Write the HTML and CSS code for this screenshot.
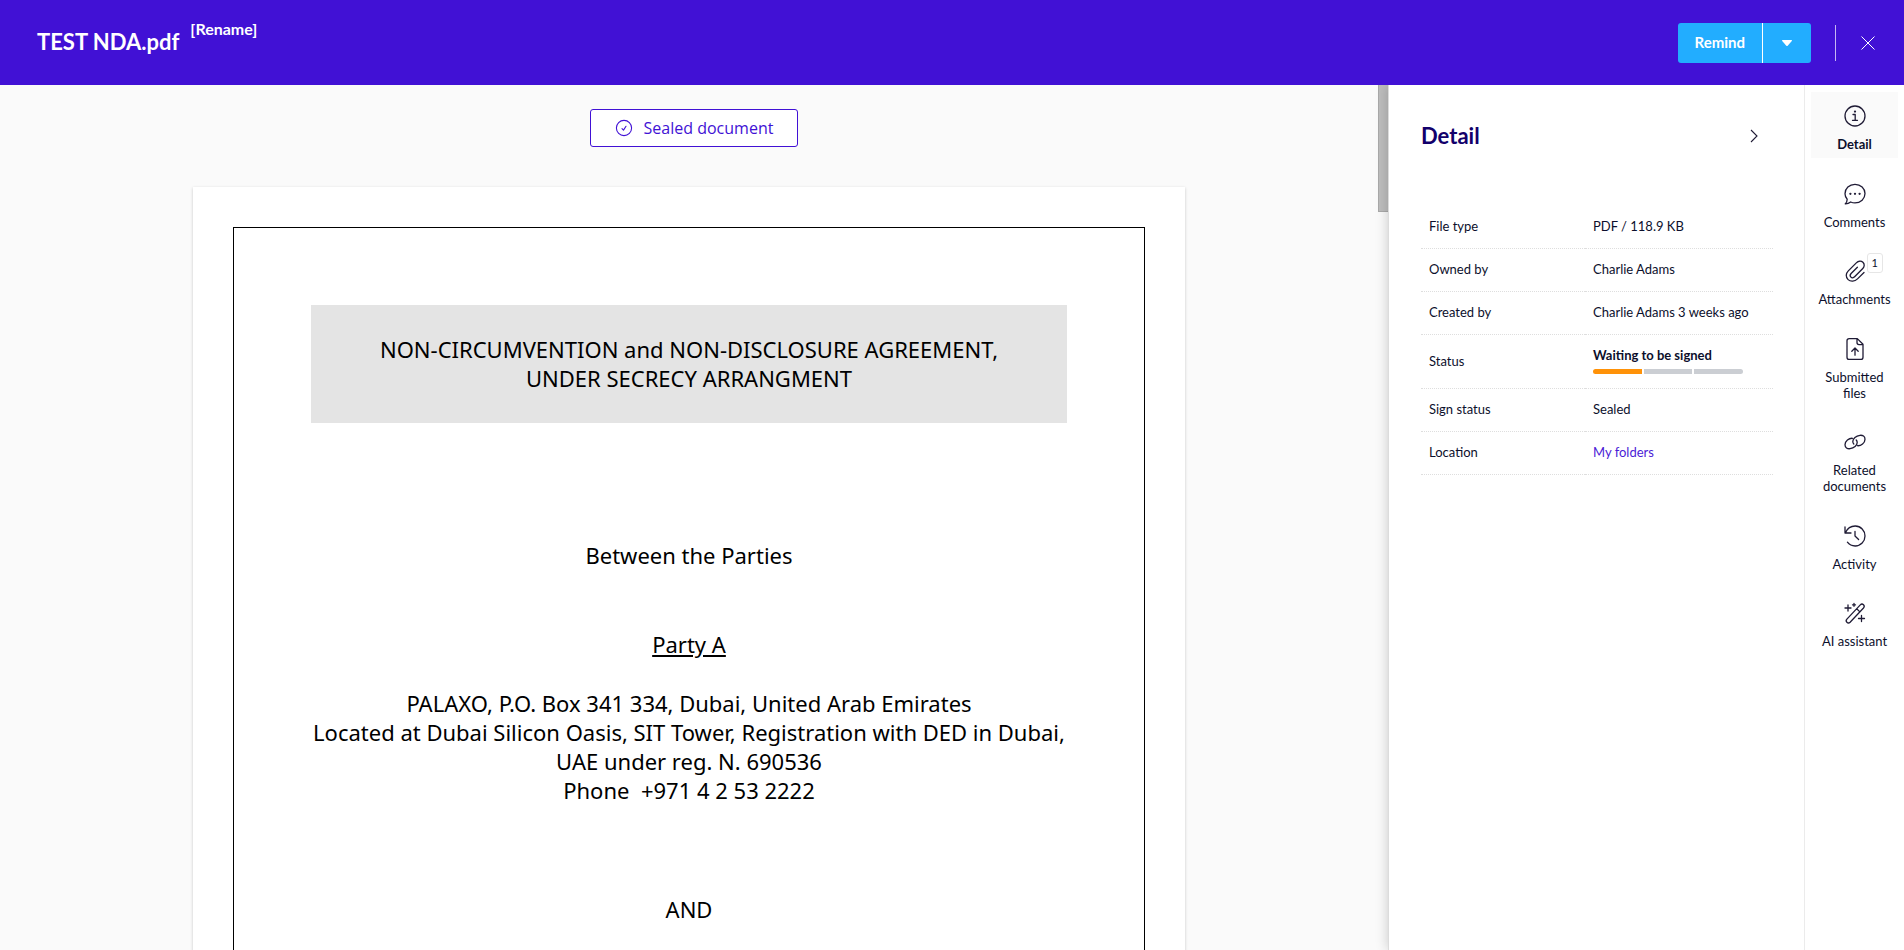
FILE: index.html
```html
<!DOCTYPE html>
<html lang="en">
<head>
<meta charset="utf-8">
<title>TEST NDA.pdf</title>
<link rel="stylesheet" href="styles.css">
</head>
<body class="app">
<header class="topbar">
  <div class="topbar-title">
    <h1 class="file-name">TEST NDA.pdf</h1>
    <button type="button" class="rename">[Rename]</button>
  </div>
  <div class="topbar-actions">
    <div class="split-button">
      <button type="button" class="split-main">Remind</button>
      <button type="button" class="split-toggle" aria-label="More actions">
        <svg width="12" height="8" viewBox="0 0 12 8"><path d="M1.6 1h8.800q1 .2.400 1L6.700 6.700q-.7.600-1.400 0L1.200 2q-.6-.8.400-1z" fill="#fff"/></svg>
      </button>
    </div>
    <span class="topbar-divider"></span>
    <button type="button" class="icon-button" aria-label="Close">
      <svg width="16" height="16" viewBox="0 0 16 16" fill="none" stroke="#fff" stroke-width="1"><path d="M1.500 1.500l13 13M14.500 1.500l-13 13"/></svg>
    </button>
  </div>
</header>
<div class="workspace">
  <main class="viewer">
    <div class="viewer-content">
      <button type="button" class="sealed">
        <svg width="18" height="18" viewBox="0 0 18 18" fill="none" stroke="currentColor" stroke-width="1.100" stroke-linecap="round" stroke-linejoin="round"><circle cx="9" cy="9" r="7.600"/><path d="M7 9.600l1.500 1.500 2.500-3.800"/></svg>
        Sealed document
      </button>
      <article class="sheet">
        <div class="sheet-frame">
          <h2 class="sheet-heading">NON-CIRCUMVENTION and NON-DISCLOSURE AGREEMENT,<br>UNDER SECRECY ARRANGMENT</h2>
          <p class="sheet-text sheet-intro">Between the Parties</p>
          <p class="sheet-text sheet-party"><u>Party A</u></p>
          <p class="sheet-text sheet-address">PALAXO, P.O. Box 341 334, Dubai, United Arab Emirates<br>Located at Dubai Silicon Oasis, SIT Tower, Registration with DED in Dubai,<br>UAE under reg. N. 690536<br>Phone&nbsp; +971 4 2 53 2222</p>
          <p class="sheet-text sheet-and">AND</p>
        </div>
      </article>
    </div>
    <div class="scrollbar"><div class="scrollbar-thumb"></div></div>
  </main>
  <aside class="detail">
    <div class="detail-head">
      <h2 class="detail-title">Detail</h2>
      <button type="button" class="icon-button" aria-label="Collapse">
        <svg width="16" height="16" viewBox="0 0 16 16" fill="none" stroke="#1f1b35" stroke-width="1.100"><path d="M5 2l6 6-6 6"/></svg>
      </button>
    </div>
    <table class="props">
      <tr><th scope="row">File type</th><td>PDF / 118.9 KB</td></tr>
      <tr><th scope="row">Owned by</th><td>Charlie Adams</td></tr>
      <tr><th scope="row">Created by</th><td>Charlie Adams 3 weeks ago</td></tr>
      <tr><th scope="row">Status</th><td><strong class="status">Waiting to be signed</strong><div class="steps"><span class="step step-done"></span><span class="step"></span><span class="step"></span></div></td></tr>
      <tr><th scope="row">Sign status</th><td>Sealed</td></tr>
      <tr><th scope="row">Location</th><td><a class="link" href="#">My folders</a></td></tr>
    </table>
  </aside>
  <nav class="rail">
    <button type="button" class="rail-item rail-active">
      <svg class="rail-icon" viewBox="0 0 24 24"><circle cx="12" cy="12" r="10"/><path d="M10 10.500h2.200v5.500M9.500 16.300h5"/><circle cx="12" cy="7.600" r=".5"/></svg>
      <span>Detail</span>
    </button>
    <button type="button" class="rail-item">
      <svg class="rail-icon" viewBox="0 0 24 24"><path d="M4.200 17.200C2.800 15.700 2 13.800 2 11.700 2 6.600 6.300 2.300 12 2.300s10 4.100 10 9.300-4.300 9.300-10 9.300c-1.600 0-3-.3-4.300-.9C6 21.300 4 22 2.200 21.900c1.300-1.300 2-3 2-4.700z"/><circle cx="7.400" cy="11.800" r=".5"/><circle cx="12" cy="11.800" r=".5"/><circle cx="16.600" cy="11.800" r=".5"/></svg>
      <span>Comments</span>
    </button>
    <button type="button" class="rail-item">
      <svg class="rail-icon" viewBox="0 0 24 24"><path d="M21 13.500l-6.500 6.400c-2.800 2.800-6.900 3.100-9.400.7s-2.500-6 .2-8.700l8-8c2-2 4.800-2.300 6.600-.6s1.700 4.300-.1 6.200l-8.200 8.300c-1.200 1.200-2.700 1.300-3.700.3s-.9-2.500.2-3.600l6.300-6.300"/></svg>
      <span>Attachments</span>
      <span class="badge">1</span>
    </button>
    <button type="button" class="rail-item">
      <svg class="rail-icon" viewBox="0 0 24 24"><path d="M14.300 1.600H6.200C5 1.600 4 2.600 4 3.800v16.400c0 1.200 1 2.200 2.200 2.200h11.600c1.200 0 2.200-1 2.200-2.200V7.300zM14 2v3.600c0 1.200.8 2 2 2h4M12 18.200v-7M8.800 14.200L12 11l3.200 3.200"/></svg>
      <span>Submitted<br>files</span>
    </button>
    <button type="button" class="rail-item">
      <svg class="rail-icon" viewBox="0 0 24 24"><path d="M9.500 8.300C6 8 2 11 2 14.800c0 2.800 2.300 4.200 5 3.900 4-.4 7.200-3.200 7.200-6.200 0-1-.4-1.900-1-2.500"/><path d="M14.500 15.700C18 16 22 13 22 9.200c0-2.800-2.300-4.200-5-3.900-4 .4-7.200 3.200-7.200 6.200 0 1 .4 1.900 1 2.500"/></svg>
      <span>Related<br>documents</span>
    </button>
    <button type="button" class="rail-item">
      <svg class="rail-icon" viewBox="0 0 24 24"><path d="M2 3v6h6M2.500 8.600C4.200 4.800 7.800 2 12.200 2 17.800 2 22 6.500 22 12s-4.300 10-9.800 10c-3.300 0-6-1.400-7.800-3.800M12 7.500V12l3.600 3.500"/></svg>
      <span>Activity</span>
    </button>
    <button type="button" class="rail-item">
      <svg class="rail-icon" viewBox="0 0 24 24"><path d="M3.900 18.100L17.300 3.900c1-1 2.300-1 3.200-.1s.9 2.200 0 3.200L7.100 21.200c-1 1-2.300 1-3.200.1s-.9-2.200 0-3.200zM13.700 7.700l3.200 3.200M5 4v6M2 7h6M18.500 14.500v6M15.500 17.500h6M11 2.300v3M9.500 3.800h3"/></svg>
      <span>AI assistant</span>
    </button>
  </nav>
</div>
</body>
</html>
```
FILE: styles.css
```css
* { box-sizing: border-box; }

.app {
  margin: 0;
  height: 100vh;
  display: flex;
  flex-direction: column;
  overflow: hidden;
  font-family: Lato, "Open Sans", sans-serif;
  font-size: 13px;
  line-height: 16px;
  color: #0c0f2c;
  background: #fff;
}

button { font: inherit; color: inherit; border: 0; background: none; padding: 0; cursor: pointer; }
svg { display: block; }

.topbar {
  flex: none;
  display: flex;
  align-items: center;
  justify-content: space-between;
  height: 85px;
  padding: 0 28px 0 37px;
  background: #4111d5;
  color: #fff;
}
.topbar-title { display: flex; align-items: flex-start; gap: 11px; padding-bottom: 8px; }
.file-name { margin: 9px 0 0; font-size: 22px; line-height: 24px; font-weight: 700; }
.rename { font-size: 16px; line-height: 16px; font-weight: 700; margin-bottom: 20px; }
.topbar-actions { display: flex; align-items: center; }
.split-button {
  display: flex;
  height: 40px;
  border-radius: 3px;
  background: #22adff;
  overflow: hidden;
}
.split-main { padding: 0 17px 2px; font-size: 15px; font-weight: 700; }
.split-toggle { display: grid; place-items: center; width: 49px; border-left: 1px solid #fff; }
.topbar-divider { width: 1px; height: 36px; margin: 0 24px; background: #c6b7f2; }
.icon-button { display: grid; place-items: center; }

.workspace { flex: 1; min-height: 0; display: flex; overflow: hidden; }

.viewer { flex: 1; min-width: 0; display: flex; background: #fafafa; overflow: hidden; }
.viewer-content {
  flex: 1;
  display: flex;
  flex-direction: column;
  align-items: center;
  gap: 40px;
  padding: 24px 32px 0;
}
.sealed {
  flex: none;
  display: flex;
  align-items: center;
  gap: 11px;
  height: 38px;
  margin-left: 10px;
  padding: 0 24px;
  border: 1px solid #4111d5;
  border-radius: 3px;
  background: #fff;
  color: #4111d5;
  font-family: "Open Sans", sans-serif;
  font-size: 16px;
}
.scrollbar { width: 10px; background: #fafafa; }
.scrollbar-thumb { height: 127px; background: #bdbdbd; border: 1px solid #a9a9a9; border-width: 0 0 1px 1px; }

.sheet {
  width: 100%;
  max-width: 992px;
  flex: none;
  padding: 40px;
  background: #fff;
  box-shadow: 0 1px 3px rgba(0, 0, 0, 0.2);
}
.sheet-frame {
  padding: 77px 77px 160px;
  border: 1px solid #000;
  font-family: "Noto Sans", sans-serif;
  font-size: 22px;
  line-height: 29px;
  text-align: center;
  color: #000;
}
.sheet-heading { margin: 0; padding: 30px 0; font-size: 22px; font-weight: 400; background: #e4e4e4; }
.sheet-text { margin: 0; }
.sheet-intro { margin-top: 118px; }
.sheet-party { margin-top: 60px; }
.sheet-address { margin-top: 30px; }
.sheet-and { margin-top: 90px; }

.detail {
  flex: none;
  width: 416px;
  padding: 37px 31px 0 32px;
  border-left: 1px solid #dcdcdc;
  box-shadow: 0 0 12px rgba(0, 0, 0, 0.2);
  background: #fff;
}
.detail-head { display: flex; align-items: center; justify-content: space-between; padding-right: 11px; }
.detail-title { margin: 0; font-size: 22px; line-height: 28px; font-weight: 700; color: #12006b; }
.props { width: 100%; margin-top: 56px; border-collapse: collapse; table-layout: fixed; }
.props tr { border-bottom: 1px dotted #dedede; }
.props th, .props td {
  padding: 12px 8px 14px;
  text-align: left;
  vertical-align: middle;
  font-weight: 400;
}
.props th { width: 164px; }
.status { display: block; font-weight: 700; }
.steps { display: flex; gap: 2px; width: 150px; margin-top: 6px; border-radius: 3px; overflow: hidden; }
.step { flex: 1; height: 5px; background: #cbced3; }
.step-done { background: #ff9208; }
.link { color: #4b1bd6; text-decoration: none; }

.rail {
  flex: none;
  display: flex;
  flex-direction: column;
  width: 100px;
  padding: 7px 6px 0;
  border-left: 1px solid #ebebeb;
  background: #fff;
}
.rail-item {
  position: relative;
  display: flex;
  flex-direction: column;
  align-items: center;
  gap: 8px;
  padding: 12px 0 6px;
  margin-bottom: 11px;
}
.rail-item:nth-child(odd) { margin-bottom: 12px; }
.rail-active { background: #fafafa; font-weight: 700; }
.rail-icon { width: 24px; height: 24px; fill: none; stroke: #1f1b35; stroke-width: 1.3; stroke-linecap: round; stroke-linejoin: round; }
.badge {
  position: absolute;
  top: 6px;
  right: 15px;
  padding: 1px 4px;
  border: 1px solid #e6e6e6;
  border-radius: 3px;
  background: #fff;
  font-size: 11px;
}
```
